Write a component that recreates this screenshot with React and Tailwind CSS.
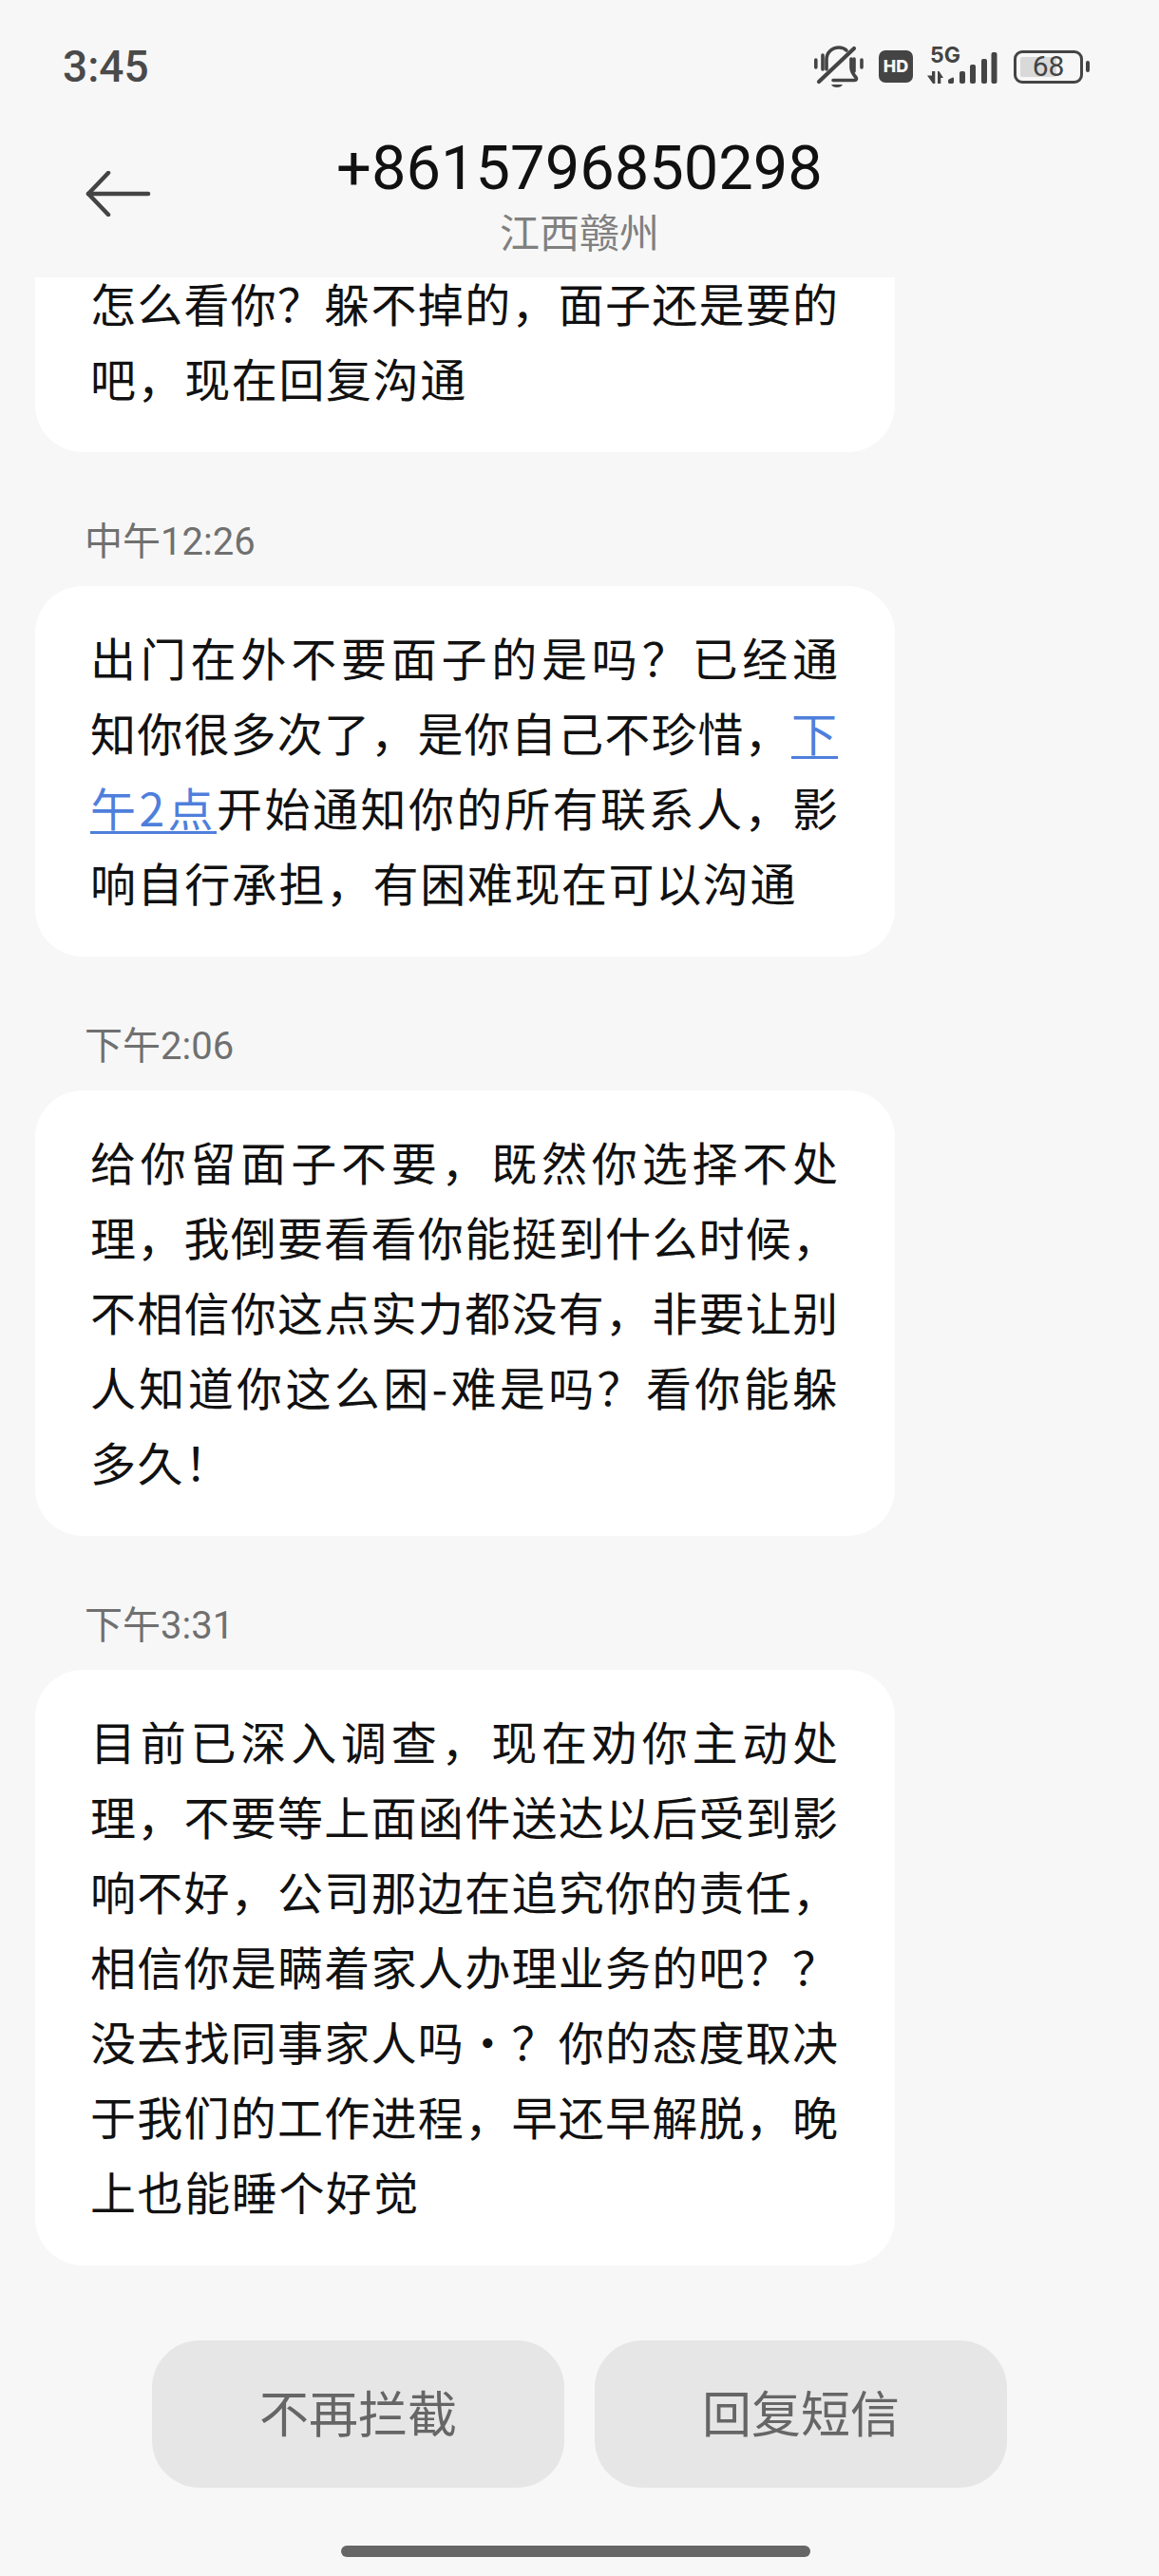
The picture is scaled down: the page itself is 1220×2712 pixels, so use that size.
import React from "react";

const cjk = "font-['Noto_Sans_CJK_SC','Liberation_Sans',sans-serif]";

function Line({ last, children }) {
  // every full line is stretched to the bubble's text width, the phone justifies them too
  return (
    <div
      className={
        last
          ? "h-[79px] whitespace-nowrap tracking-[1.6px]"
          : "h-[79px] w-[787px] text-justify [text-align-last:justify] [text-justify:inter-character] whitespace-nowrap"
      }
    >
      {children}
    </div>
  );
}

function Bubble({ lines }) {
  return (
    <div className="w-[905px] ml-[37px] rounded-[50px] bg-white pl-[58px] pt-[35px] pb-[39px] text-[48px] leading-[79px] text-[#111111]">
      {lines.map((line, i) => (
        <Line key={i} last={i === lines.length - 1}>
          {line}
        </Line>
      ))}
    </div>
  );
}

// the bubble scrolled under the header: no top corners, first line sits right at the edge
function ScrolledBubble() {
  return (
    <div className="w-[905px] ml-[37px] rounded-b-[50px] bg-white pl-[58px] pb-[39px] text-[48px] text-[#111111]">
      <div className="h-[66px] w-[787px] leading-[53px] text-justify [text-align-last:justify] [text-justify:inter-character] whitespace-nowrap">
        怎么看你？躲不掉的，面子还是要的
      </div>
      <div className="h-[79px] leading-[79px] whitespace-nowrap tracking-[1.6px]">吧，现在回复沟通</div>
    </div>
  );
}

function TimeLabel({ children }) {
  return (
    <div className="pt-[71px] pb-[22px] pl-[89px] text-[40px] leading-[48px] text-[#707070] font-['Roboto','Noto_Sans_CJK_SC',sans-serif]">
      {children}
    </div>
  );
}

function Link({ children }) {
  return <span className="text-[#4f7fdc] tracking-[1px] underline underline-offset-[5px] decoration-[3px]">{children}</span>;
}

function BellOff() {
  return (
    <svg width="52" height="44" viewBox="0 0 52 44" fill="none" stroke="#444444" strokeWidth="3.6" strokeLinecap="round" strokeLinejoin="round">
      <path d="M1.800 15v8M9 10v15M42 14v13M50 15v8" />
      <path d="M13 25V15C13 7 19 2 26 2c3.500 0 6 1 8 3" />
      <path d="M39 14v9c0 4 2 7 5 10.500 1 1.500.5 3-1.500 3H20" />
      <path d="M5 38 42 3" strokeWidth="4.200" />
      <path d="M18 41h12c-1 2-3 3-6 3s-5-1-6-3Z" fill="#444444" stroke="none" />
    </svg>
  );
}

function Signal() {
  return (
    <div className="relative w-[74px] h-[38px] -mt-[2px]">
      <span className="absolute left-[3px] -top-[5px] text-[23px] leading-[26px] font-bold text-[#444444] font-['Inter',sans-serif]">
        5G
      </span>
      <svg className="absolute left-0 top-0" width="74" height="38" viewBox="0 0 74 38" fill="#444444">
        <path d="M8.300 25V38H6L0 29.500H5V25Z" />
        <path d="M11 25h1.500L17 32H14.300V38H11Z" />
        <path d="M22 35c0-.8.4-1.300 1.100-1.700l3.400-1.600c.8-.3 1.500.1 1.500 1V36.300c0 1-.6 1.700-1.500 1.700h-3c-1 0-1.500-.7-1.500-1.700Z" />
        <rect x="34" y="25" width="6" height="13" rx="2" />
        <rect x="45" y="18" width="6" height="20" rx="2" />
        <rect x="57" y="12" width="6" height="26" rx="2" />
        <rect x="67.500" y="5" width="6" height="33" rx="2" />
      </svg>
    </div>
  );
}

function Battery() {
  return (
    <div className="flex items-center">
      <div className="relative w-[73px] h-[35px] rounded-[9px] border-[3px] border-[#444444] p-[4px]">
        <div className="w-[38px] h-full rounded-[2px] bg-[#d9d9d9]" />
        <span className="absolute inset-0 flex items-center justify-center text-[30px] leading-none text-[#444444] font-['Roboto',sans-serif]">
          68
        </span>
      </div>
      <div className="ml-[3px] w-[4px] h-[12px] rounded-full bg-[#444444]" />
    </div>
  );
}

export default function App() {
  return (
    <div className={"w-[1220px] h-[2712px] overflow-hidden bg-[#f7f7f7] " + cjk}>
      <div className="h-[292px]">
        <div className="flex items-center justify-between h-[44px] pt-[48px] pl-[66px] pr-[73px] box-content">
          <span className="text-[46px] leading-none font-medium text-[#4a4a4a] font-['Roboto',sans-serif]">3:45</span>
          <div className="flex items-center">
            <BellOff />
            <div className="ml-[16px] mr-[15px] w-[36px] h-[34px] rounded-[7px] bg-[#444444] flex items-center justify-center text-[18px] leading-none font-extrabold text-[#f7f7f7] font-['Inter',sans-serif]">
              HD
            </div>
            <Signal />
            <div className="w-[17px]" />
            <Battery />
          </div>
        </div>
        <div className="relative flex flex-col items-center pt-[47px]">
          <svg className="absolute left-[90px] top-[88px]" width="70" height="48" viewBox="0 0 70 48" fill="none" stroke="#444444" strokeWidth="4.500" strokeLinecap="round" strokeLinejoin="round">
            <path d="M66 24H3" />
            <path d="M24 2 3 24 24 46" />
          </svg>
          <div className="text-[65px] leading-[76px] text-[#111111] font-['Roboto',sans-serif]">+8615796850298</div>
          <div className="mt-[3px] text-[42px] leading-[50px] text-[#808080]">江西赣州</div>
        </div>
      </div>

      <div className="h-[2172px]">
        <ScrolledBubble />
        <TimeLabel>中午12:26</TimeLabel>
        <Bubble
          lines={[
            "出门在外不要面子的是吗？已经通",
            <>知你很多次了，是你自己不珍惜，<Link>下</Link></>,
            <><Link>午2点</Link>开始通知你的所有联系人，影</>,
            "响自行承担，有困难现在可以沟通",
          ]}
        />
        <TimeLabel>下午2:06</TimeLabel>
        <Bubble
          lines={[
            "给你留面子不要，既然你选择不处",
            "理，我倒要看看你能挺到什么时候，",
            "不相信你这点实力都没有，非要让别",
            "人知道你这么困-难是吗？看你能躲",
            "多久！",
          ]}
        />
        <TimeLabel>下午3:31</TimeLabel>
        <Bubble
          lines={[
            "目前已深入调查，现在劝你主动处",
            "理，不要等上面函件送达以后受到影",
            "响不好，公司那边在追究你的责任，",
            "相信你是瞒着家人办理业务的吧？？",
            "没去找同事家人吗·？你的态度取决",
            "于我们的工作进程，早还早解脱，晚",
            "上也能睡个好觉",
          ]}
        />
      </div>

      <div className="flex justify-center gap-[32px] h-[155px]">
        <button className="w-[434px] h-[155px] pb-[5px] rounded-[50px] bg-[#e6e6e6] text-[52px] text-[#666666]">不再拦截</button>
        <button className="w-[434px] h-[155px] pb-[5px] rounded-[50px] bg-[#e6e6e6] text-[52px] text-[#666666]">回复短信</button>
      </div>
      <div className="mt-[61px] ml-[359px] w-[494px] h-[12px] rounded-full bg-[#666666]" />
    </div>
  );
}
